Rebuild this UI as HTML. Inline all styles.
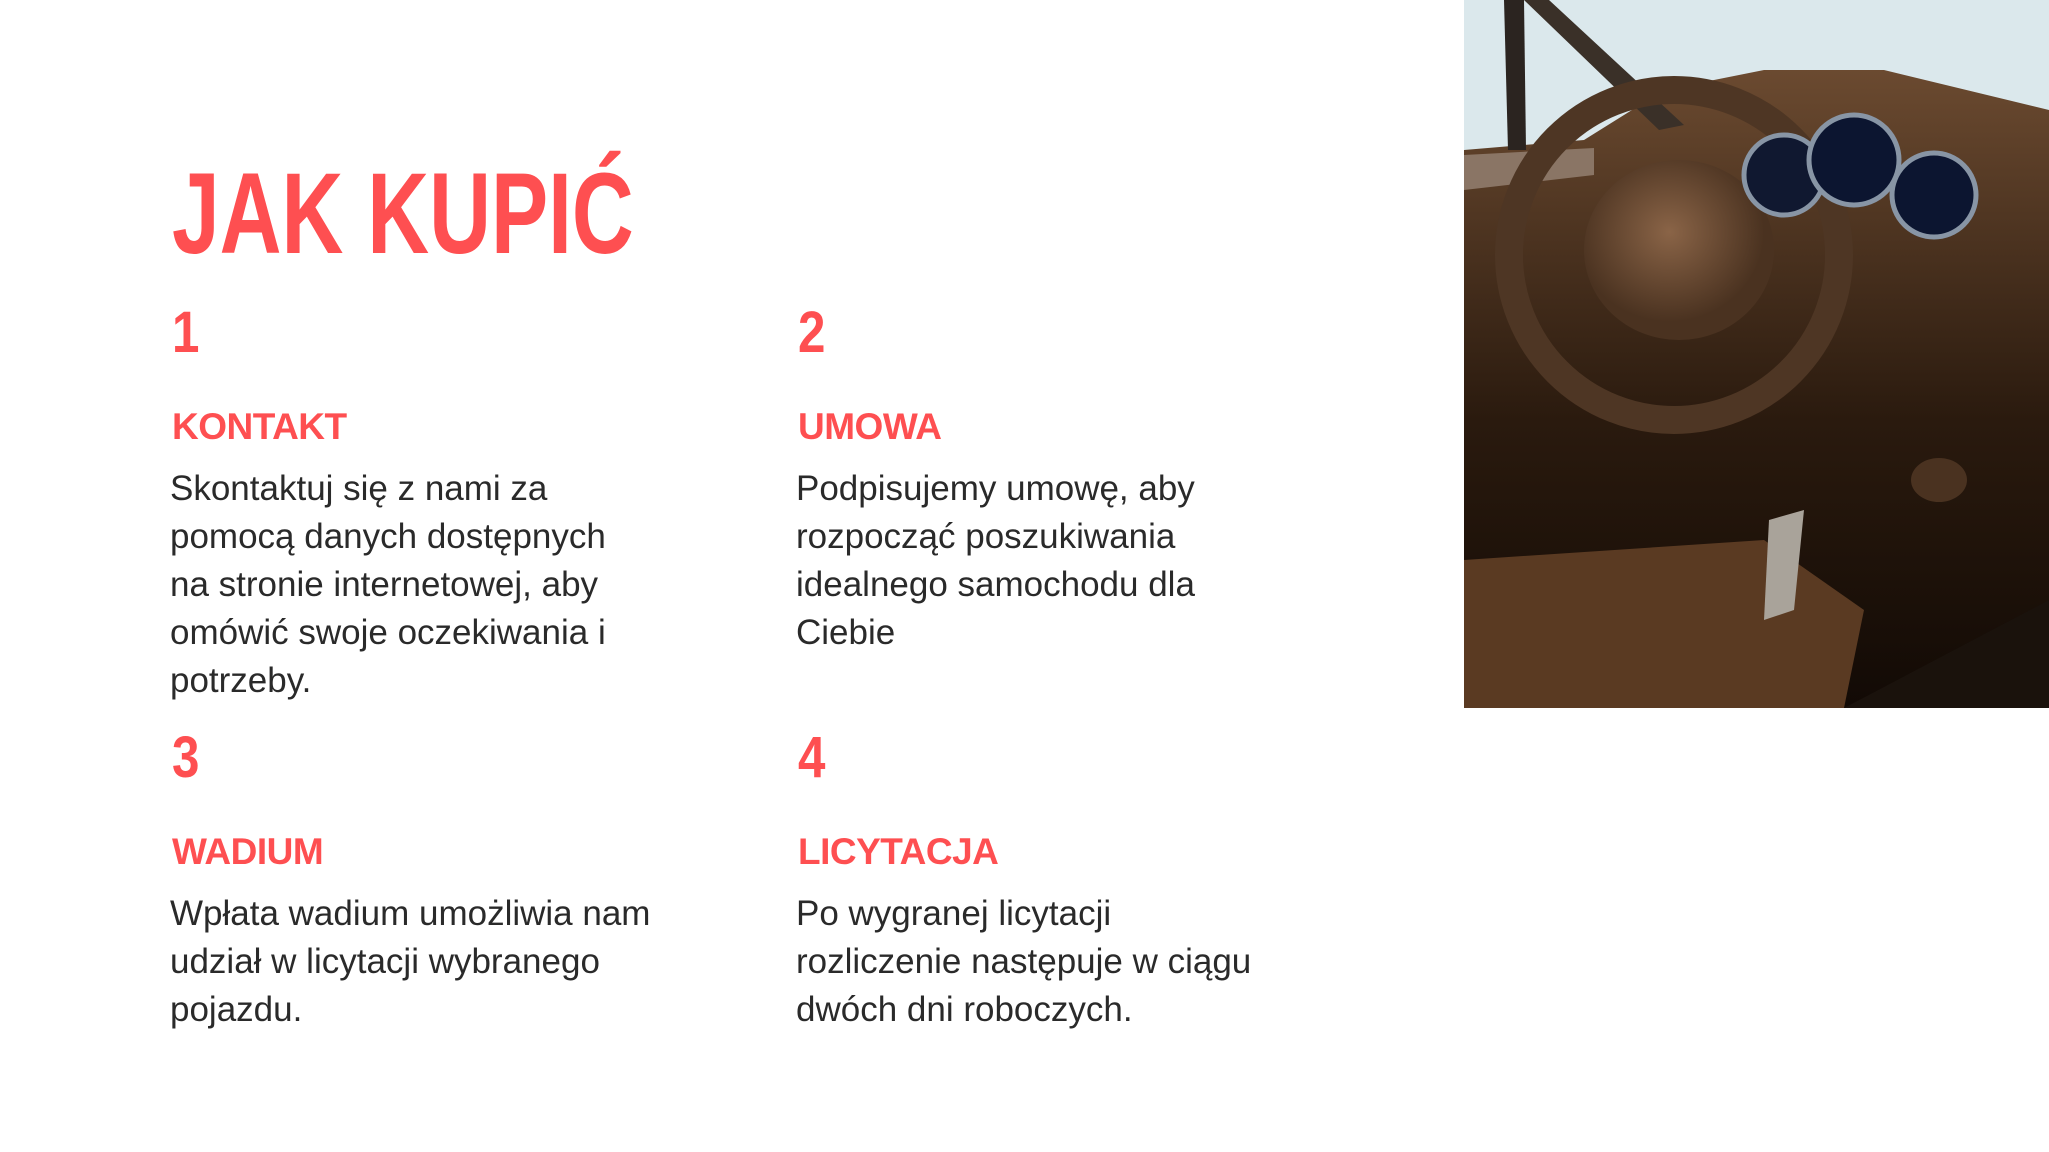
<!DOCTYPE html>
<html><head><meta charset="utf-8"><style>
html,body{margin:0;padding:0;background:#fff;}
body{width:2049px;height:1152px;position:relative;overflow:hidden;font-family:"Liberation Sans",sans-serif;}
.r{color:#fe4f51;}
.t{position:absolute;left:172px;top:157px;font-size:115px;font-weight:bold;line-height:1;white-space:nowrap;transform:scaleX(.745);transform-origin:0 0;}
.n{position:absolute;font-size:58px;font-weight:bold;line-height:1;transform:scaleX(.85);transform-origin:0 0;}
.h{position:absolute;font-size:37px;font-weight:bold;line-height:1;letter-spacing:-0.5px;}
.b{position:absolute;font-size:35px;line-height:48px;color:#2a2a2a;width:560px;}
</style></head><body>
<div class="t r">JAK KUPIĆ</div>

<div class="n r" style="left:172px;top:304px">1</div>
<div class="h r" style="left:172px;top:408px">KONTAKT</div>
<div class="b" style="left:170px;top:465px">Skontaktuj się z nami za<br>pomocą danych dostępnych<br>na stronie internetowej, aby<br>omówić swoje oczekiwania i<br>potrzeby.</div>

<div class="n r" style="left:798px;top:304px">2</div>
<div class="h r" style="left:798px;top:408px">UMOWA</div>
<div class="b" style="left:796px;top:465px">Podpisujemy umowę, aby<br>rozpocząć poszukiwania<br>idealnego samochodu dla<br>Ciebie</div>

<div class="n r" style="left:172px;top:729px">3</div>
<div class="h r" style="left:172px;top:833px">WADIUM</div>
<div class="b" style="left:170px;top:890px">Wpłata wadium umożliwia nam<br>udział w licytacji wybranego<br>pojazdu.</div>

<div class="n r" style="left:798px;top:729px">4</div>
<div class="h r" style="left:798px;top:833px">LICYTACJA</div>
<div class="b" style="left:796px;top:890px">Po wygranej licytacji<br>rozliczenie następuje w ciągu<br>dwóch dni roboczych.</div>

<svg style="position:absolute;left:1464px;top:0" width="585" height="708" viewBox="0 0 585 708">
<defs>
<linearGradient id="g" x1="0" y1="0" x2="0" y2="1">
<stop offset="0" stop-color="#6b4a30"/><stop offset=".55" stop-color="#2a1a0e"/><stop offset="1" stop-color="#120a05"/></linearGradient>
<radialGradient id="w" cx=".45" cy=".4" r=".5"><stop offset="0" stop-color="#8a6447"/><stop offset="1" stop-color="#4a3220"/></radialGradient>
</defs>
<rect width="585" height="708" fill="#dbe8ec"/>
<path d="M0 150 L120 140 L200 90 L300 70 L420 70 L585 110 L585 708 L0 708Z" fill="url(#g)"/>
<path d="M0 155 L130 148 L130 175 L0 190Z" fill="#8a7565"/>
<path d="M40 0 L60 0 L62 150 L44 150Z" fill="#2b2420"/>
<path d="M60 0 L85 0 L220 125 L195 130Z" fill="#3a3028"/>
<circle cx="210" cy="255" r="165" fill="none" stroke="#4e3624" stroke-width="28"/>
<ellipse cx="215" cy="250" rx="95" ry="90" fill="url(#w)"/>
<circle cx="320" cy="175" r="40" fill="#101830" stroke="#8895a5" stroke-width="5"/>
<circle cx="390" cy="160" r="45" fill="#0c1530" stroke="#8895a5" stroke-width="5"/>
<circle cx="470" cy="195" r="42" fill="#0c1530" stroke="#8895a5" stroke-width="5"/>
<path d="M0 560 L300 540 L400 610 L380 708 L0 708Z" fill="#5a3a22"/>
<path d="M305 520 L340 510 L330 610 L300 620Z" fill="#a9a39a"/>
<ellipse cx="475" cy="480" rx="28" ry="22" fill="#4a3220"/>
<path d="M380 708 L585 600 L585 708Z" fill="#1a120c"/>
</svg>
</body></html>
